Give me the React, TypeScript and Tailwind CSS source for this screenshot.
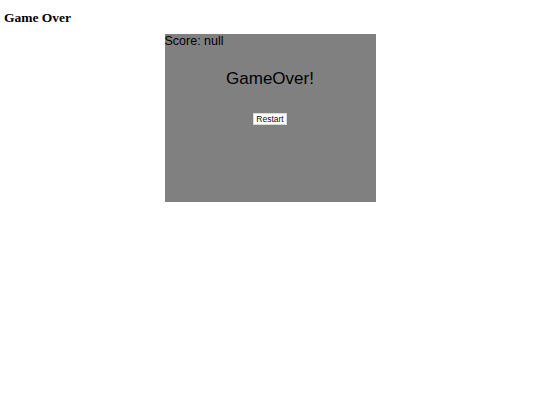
import React from 'react';

export default function App() {
  return (
    <div className="min-h-[405px] bg-white">
      <h1 className="px-[4px] pt-[10px] text-[13.5px] leading-[16px] font-bold text-black" style={{ fontFamily: '"Liberation Serif", serif' }}>
        Game Over
      </h1>
      <div
        className="mx-auto mt-[8px] w-[211px] h-[168px] bg-[#808080] flex flex-col text-black"
        style={{ fontFamily: '"Liberation Sans", Arial, sans-serif' }}
      >
        <p className="text-[12.5px] leading-[15px]">Score: null</p>
        <p className="mt-[20px] text-center text-[17px] leading-[20px]">GameOver!</p>
        <div className="mt-[24px] flex justify-center">
          <button className="bg-white border border-[#d8d8d8] px-[2px] text-[8.5px] leading-[10px] text-[#111]">Restart</button>
        </div>
      </div>
    </div>
  );
}
